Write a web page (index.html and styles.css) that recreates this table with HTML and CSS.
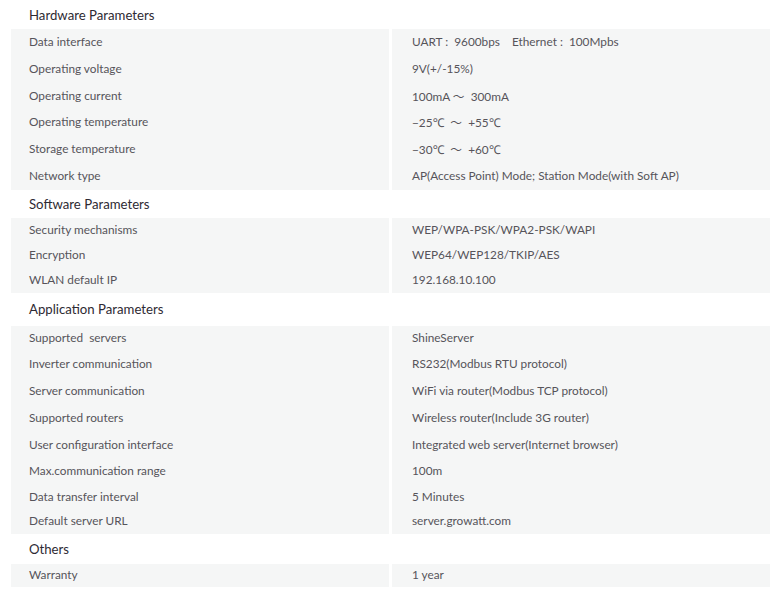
FILE: index.html
```html
<!DOCTYPE html>
<html>
<head>
<meta charset="utf-8">
<link rel="stylesheet" href="styles.css">
</head>
<body>
<div class="spec">
  <div class="section-title t-hw">Hardware Parameters</div>
  <div class="grid g-hw">
    <div class="cell">Data interface</div><div class="cell val">UART&nbsp;:&nbsp; 9600bps&nbsp;&nbsp;&nbsp;&nbsp;Ethernet&nbsp;:&nbsp; 100Mpbs</div>
    <div class="cell">Operating voltage</div><div class="cell val">9V(+/-15%)</div>
    <div class="cell">Operating current</div><div class="cell val">100mA ～&nbsp; 300mA</div>
    <div class="cell">Operating temperature</div><div class="cell val">−25℃&nbsp; ～&nbsp; +55℃</div>
    <div class="cell">Storage temperature</div><div class="cell val">−30℃&nbsp; ～&nbsp; +60℃</div>
    <div class="cell">Network type</div><div class="cell val">AP(Access Point) Mode; Station Mode(with Soft AP)</div>
  </div>
  <div class="section-title t-sw">Software Parameters</div>
  <div class="grid g-sw">
    <div class="cell">Security mechanisms</div><div class="cell val">WEP/WPA-PSK/WPA2-PSK/WAPI</div>
    <div class="cell">Encryption</div><div class="cell val">WEP64/WEP128/TKIP/AES</div>
    <div class="cell">WLAN default IP</div><div class="cell val">192.168.10.100</div>
  </div>
  <div class="section-title t-app">Application Parameters</div>
  <div class="grid g-app">
    <div class="cell">Supported&nbsp; servers</div><div class="cell val">ShineServer</div>
    <div class="cell">Inverter communication</div><div class="cell val">RS232(Modbus RTU protocol)</div>
    <div class="cell">Server communication</div><div class="cell val">WiFi via router(Modbus TCP protocol)</div>
    <div class="cell">Supported routers</div><div class="cell val">Wireless router(Include 3G router)</div>
    <div class="cell">User configuration interface</div><div class="cell val">Integrated web server(Internet browser)</div>
    <div class="cell">Max.communication range</div><div class="cell val">100m</div>
    <div class="cell">Data transfer interval</div><div class="cell val">5 Minutes</div>
    <div class="cell">Default server URL</div><div class="cell val">server.growatt.com</div>
  </div>
  <div class="section-title t-oth">Others</div>
  <div class="grid g-oth">
    <div class="cell">Warranty</div><div class="cell val">1 year</div>
  </div>
</div>
</body>
</html>
```
FILE: styles.css
```css
html, body {
  margin: 0;
  padding: 0;
  background: #ffffff;
}
body {
  font-family: Lato, "Noto Sans", "Noto Sans CJK SC", sans-serif;
  color: #56545a;
}
.spec {
  width: 759px;
  margin-left: 11px;
}
.section-title {
  display: flex;
  align-items: center;
  padding-left: 18px;
  font-size: 13.2px;
  color: #2e2a33;
}
.t-hw { height: 29px; }
.t-sw { height: 28px; }
.t-app { height: 33px; }
.t-oth { height: 30px; }
.grid {
  display: grid;
  grid-template-columns: 378px 378px;
  column-gap: 3px;
}
.g-hw { grid-auto-rows: 26.83px; }
.g-sw { grid-auto-rows: 25px; }
.g-app { grid-template-rows: 25px 27px 27px 27px 27px 26px 25px 24px; }
.g-oth { grid-auto-rows: 23px; }
.cell {
  background: #f5f6f6;
  display: flex;
  align-items: center;
  padding-left: 18px;
  padding-bottom: 2px;
  box-sizing: border-box;
  font-size: 11.8px;
  white-space: nowrap;
}
.cell.val {
  padding-left: 20px;
}
```
